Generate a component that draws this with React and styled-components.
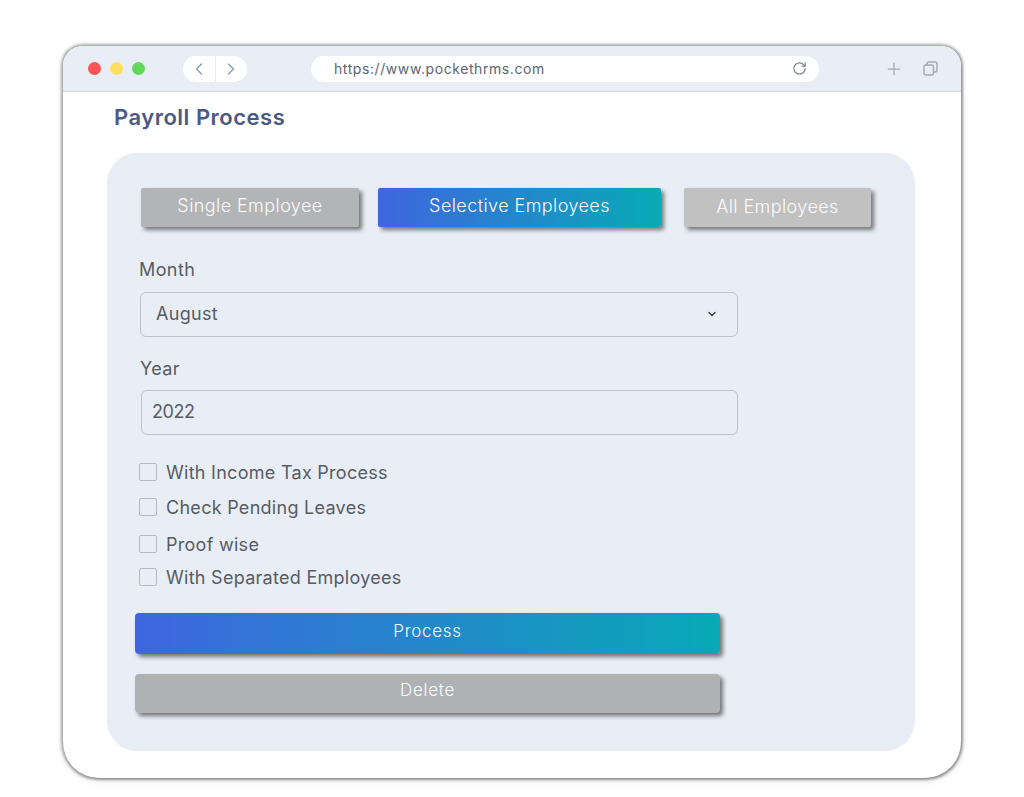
import React from "react";
import styled, { createGlobalStyle } from "styled-components";
import { ChevronLeft, ChevronRight, ChevronDown, Plus, RotateCw } from "lucide-react";

const Global = createGlobalStyle`
  html, body { margin: 0; padding: 0; background: #fff; }
  body { font-family: Inter, "Open Sans", sans-serif; }
  * { box-sizing: border-box; }
`;

const Stage = styled.div`
  width: 1024px;
  height: 797px;
  padding: 46px 63px 0;
`;

const BrowserWindow = styled.div`
  width: 898px;
  height: 732px;
  border-radius: 20px 20px 36px 36px;
  background: #fff;
  overflow: hidden;
  box-shadow: 0 0 3px 1.5px rgba(0, 0, 0, 0.32), 1px 1px 3px rgba(0, 0, 0, 0.2), 0 4px 10px rgba(0, 0, 0, 0.06);
`;
const Frame = styled.div`
  height: 100%;
  display: flex;
  flex-direction: column;
`;

const Toolbar = styled.div`
  height: 46px;
  flex: none;
  display: flex;
  align-items: center;
  padding-left: 25px;
  background: #e9edf5;
  border-bottom: 1px solid #d5d8de;
`;
const Dots = styled.div`
  display: flex;
  gap: 9px;
  margin-right: 38px;
`;
const Dot = styled.span`
  width: 13px;
  height: 13px;
  border-radius: 50%;
  background: ${(p) => p.$color};
`;
const NavPill = styled.div`
  width: 64px;
  height: 26px;
  display: flex;
  border-radius: 13px;
  background: #fff;
  color: #8d97a5;
  margin-right: 64px;
`;
const NavHalf = styled.span`
  flex: 1;
  display: flex;
  align-items: center;
  justify-content: center;
  & + & { border-left: 1px solid #e9edf5; }
`;
const UrlPill = styled.div`
  width: 508px;
  height: 26px;
  display: flex;
  align-items: center;
  justify-content: space-between;
  padding: 0 12px 0 23px;
  border-radius: 13px;
  background: #fff;
  color: #5e6570;
  font-size: 14px;
  letter-spacing: 0.58px;
  margin-right: 65px;
`;
const ReloadIcon = styled(RotateCw)`
  color: #7f8892;
`;
const ToolIcons = styled.div`
  display: flex;
  align-items: center;
  gap: 19px;
  color: #a3abb7;
`;

const Content = styled.main`
  flex: 1;
  padding: 11px 46px 27px 44px;
  display: flex;
  flex-direction: column;
`;
const Title = styled.h1`
  margin: 0 0 22px 7px;
  height: 28px;
  line-height: 28px;
  font-size: 22px;
  font-weight: 600;
  letter-spacing: 0.5px;
  color: #4a5a85;
`;
const Panel = styled.section`
  flex: 1;
  background: #e9edf5;
  border-radius: 30px;
  padding: 35px 0 0 28px;
`;

const Tabs = styled.div`
  display: flex;
  margin: 0 0 31px 6px;
`;
const Tab = styled.button`
  width: ${(p) => p.$w}px;
  height: 39px;
  margin-right: ${(p) => p.$gap || 0}px;
  border: 0;
  border-radius: 2px;
  padding: ${(p) => (p.$low ? "0 0 2px" : "0 0 5px")};
  background: ${(p) => p.$bg};
  color: #fbfbfc;
  font-family: inherit;
  font-size: 18px;
  font-weight: 300;
  letter-spacing: 0.42px;
  box-shadow: 3px 3px 4px rgba(0, 0, 0, 0.5);
`;
const gradient = "linear-gradient(90deg, #3f66e0, #07aab6)";

const Label = styled.label`
  display: block;
  height: 24px;
  line-height: 24px;
  margin: ${(p) => p.$m};
  font-size: 18px;
  letter-spacing: 0.4px;
  color: #565c63;
`;
const Field = styled.div`
  width: ${(p) => p.$w}px;
  height: 45px;
  margin-left: ${(p) => p.$ml}px;
  display: flex;
  align-items: center;
  justify-content: space-between;
  padding: 0 19px 2px ${(p) => p.$pl}px;
  border: 1px solid #bdc2cb;
  border-radius: 6px;
  font-size: 18px;
  letter-spacing: ${(p) => p.$ls}px;
  color: #565c63;
`;
const Checks = styled.div`
  margin: 28px 0 0 4px;
`;
const Check = styled.div`
  height: 18px;
  display: flex;
  align-items: center;
  gap: 9px;
  margin-bottom: ${(p) => p.$mb}px;
  font-size: 18px;
  letter-spacing: 0.28px;
  color: #565c63;
`;
const Box = styled.span`
  width: 18px;
  height: 18px;
  flex: none;
  border: 1px solid #b4b9c2;
  border-radius: 2px;
`;
const Wide = styled.button`
  display: block;
  width: 585px;
  height: ${(p) => p.$h}px;
  margin: ${(p) => p.$m};
  border: 0;
  border-radius: 4px;
  padding: 0 0 ${(p) => p.$pb}px;
  background: ${(p) => p.$bg};
  color: #fafbfc;
  font-family: inherit;
  font-size: 17px;
  font-weight: 300;
  letter-spacing: 0.7px;
  box-shadow: 3px 3px 4px rgba(0, 0, 0, 0.5);
`;

const CopyIcon = () => (
  <svg width="15" height="15" viewBox="0 0 15 15" fill="none" stroke="currentColor" strokeWidth="1.5">
    <rect x="1" y="4" width="9.5" height="10" rx="2" />
    <path d="M4 4V3a2 2 0 0 1 2-2h6a2 2 0 0 1 2 2v6a2 2 0 0 1-2 2h-1.5" />
  </svg>
);

export default function App() {
  return (
    <Stage>
      <Global />
      <BrowserWindow>
        <Frame>
          <Toolbar>
            <Dots>
              <Dot $color="#fd5353" />
              <Dot $color="#fddf63" />
              <Dot $color="#5fd85b" />
            </Dots>
            <NavPill>
              <NavHalf><ChevronLeft size={20} strokeWidth={1.6} /></NavHalf>
              <NavHalf><ChevronRight size={20} strokeWidth={1.6} /></NavHalf>
            </NavPill>
            <UrlPill>
              <span>https://www.pockethrms.com</span>
              <ReloadIcon size={15} strokeWidth={2} />
            </UrlPill>
            <ToolIcons>
              <Plus size={20} strokeWidth={1.5} />
              <CopyIcon />
            </ToolIcons>
          </Toolbar>
          <Content>
            <Title>Payroll Process</Title>
            <Panel>
              <Tabs>
                <Tab $w={218} $gap={19} $bg="#b3b4b6">Single Employee</Tab>
                <Tab $w={283} $gap={23} $bg={gradient}>Selective Employees</Tab>
                <Tab $w={187} $bg="#c1c1c1" $low>All Employees</Tab>
              </Tabs>
              <Label $m="0 0 10px 4px">Month</Label>
              <Field $w={598} $ml={5} $pl={15} $ls={0.3}>
                <span>August</span>
                <ChevronDown size={12} strokeWidth={2.4} color="#2b2f36" />
              </Field>
              <Label $m="20px 0 9px 5px">Year</Label>
              <Field $w={597} $ml={6} $pl={10} $ls={-0.4}>2022</Field>
              <Checks>
                <Check $mb={17}><Box />With Income Tax Process</Check>
                <Check $mb={19}><Box />Check Pending Leaves</Check>
                <Check $mb={15}><Box />Proof wise</Check>
                <Check $mb={0}><Box />With Separated Employees</Check>
              </Checks>
              <Wide $h={41} $pb={6} $m="27px 0 20px 0" $bg={gradient}>Process</Wide>
              <Wide $h={39} $pb={8} $m="0" $bg="#b0b1b3">Delete</Wide>
            </Panel>
          </Content>
        </Frame>
      </BrowserWindow>
    </Stage>
  );
}
